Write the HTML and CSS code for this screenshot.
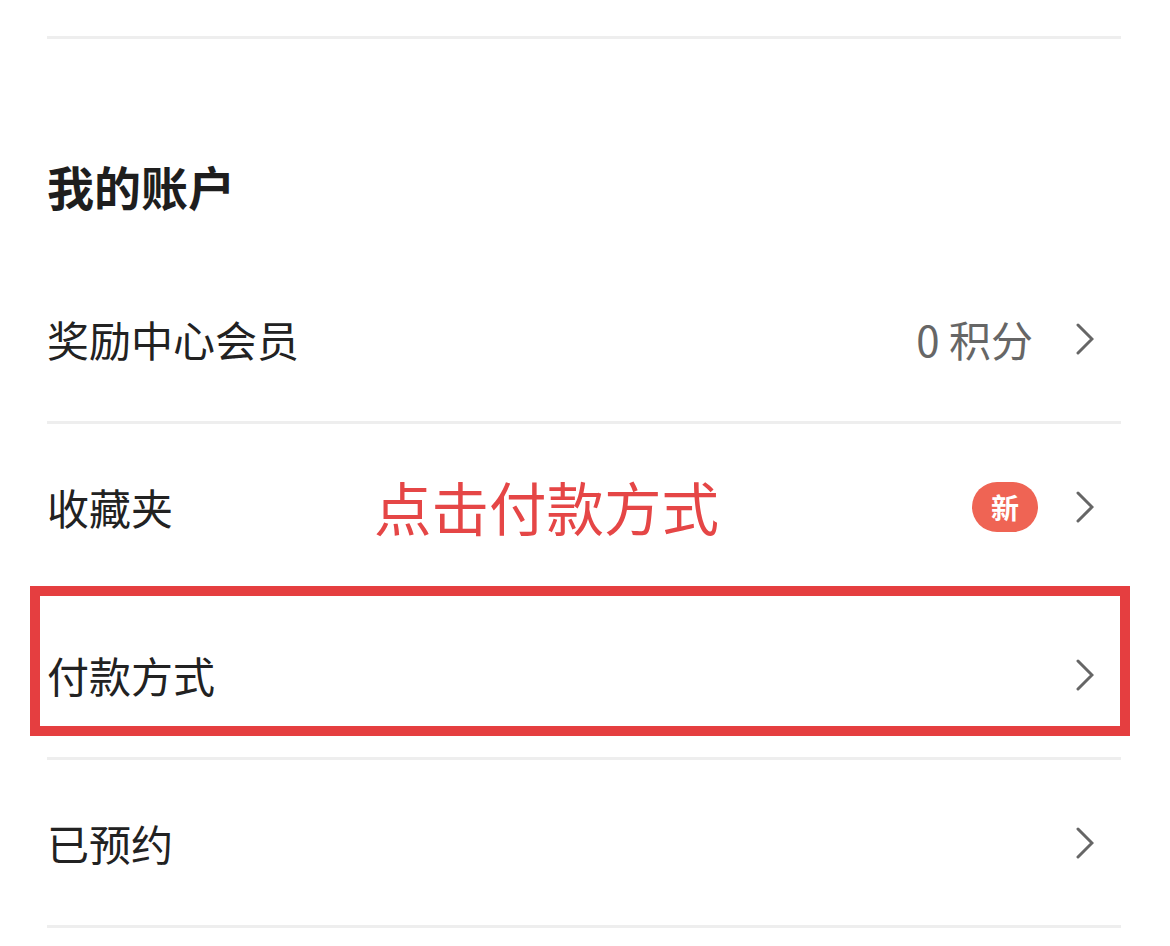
FILE: index.html
```html
<!DOCTYPE html>
<html>
  <head>
    <meta charset="utf-8"/>
    <link rel="stylesheet" href="styles.css">
  </head>
  <body>
    <div class="page">
      <div class="divider"></div>

      <div class="section-title">我的账户</div>

      <div class="row">
        <span class="row-label">奖励中心会员</span>
        <span class="row-right">
          <span class="row-value">0 积分</span>
          <svg class="chevron" width="18" height="32" viewBox="0 0 18 32"><polyline points="2,2 16,16 2,30"/></svg>
        </span>
      </div>

      <div class="row">
        <span class="row-label">收藏夹</span>
        <span class="hint">点击付款方式</span>
        <span class="row-right">
          <span class="badge">新</span>
          <svg class="chevron" width="18" height="32" viewBox="0 0 18 32"><polyline points="2,2 16,16 2,30"/></svg>
        </span>
      </div>

      <div class="row">
        <span class="row-label">付款方式</span>
        <span class="row-right">
          <svg class="chevron" width="18" height="32" viewBox="0 0 18 32"><polyline points="2,2 16,16 2,30"/></svg>
        </span>
        <div class="highlight"></div>
      </div>

      <div class="row">
        <span class="row-label">已预约</span>
        <span class="row-right">
          <svg class="chevron" width="18" height="32" viewBox="0 0 18 32"><polyline points="2,2 16,16 2,30"/></svg>
        </span>
      </div>
    </div>
  </body>
</html>
```

FILE: styles.css
```css
html, body {
  margin: 0;
  padding: 0;
  background-color: #fff;
}
body {
  font-family: "Noto Sans CJK SC", "Noto Sans", sans-serif;
  color: #222;
}
.page {
  padding: 36px 49px 0 47px;
}
.divider {
  height: 3px;
  background-color: #eee;
}
.section-title {
  font-size: 47px;
  font-weight: bold;
  line-height: 64px;
  padding: 115px 0 38px 0;
  color: #1e1e1e;
}
.row {
  position: relative;
  display: flex;
  align-items: center;
  justify-content: space-between;
  height: 165px;
  border-bottom: 3px solid #eee;
  padding-right: 27px;
}
.row-label {
  font-size: 42px;
  line-height: 1;
}
.row-right {
  display: flex;
  align-items: center;
}
.row-value {
  font-size: 42px;
  line-height: 1;
  color: #666;
  margin-right: 43px;
}
.badge {
  display: inline-block;
  width: 66px;
  height: 50px;
  line-height: 50px;
  border-radius: 25px;
  background-color: #ef6454;
  color: #fff;
  font-size: 28px;
  font-weight: bold;
  text-align: center;
  margin-right: 38px;
}
.chevron {
  fill: none;
  stroke: #666;
  stroke-width: 3;
  stroke-linecap: round;
  stroke-linejoin: miter;
}
.hint {
  position: absolute;
  left: 327px;
  top: 50%;
  transform: translateY(-50%);
  font-size: 57.5px;
  line-height: 1;
  color: #e54646;
}
.highlight {
  position: absolute;
  left: -17px;
  right: -9px;
  top: -6px;
  height: 150px;
  box-sizing: border-box;
  border: 10px solid #e53e40;
}
```
